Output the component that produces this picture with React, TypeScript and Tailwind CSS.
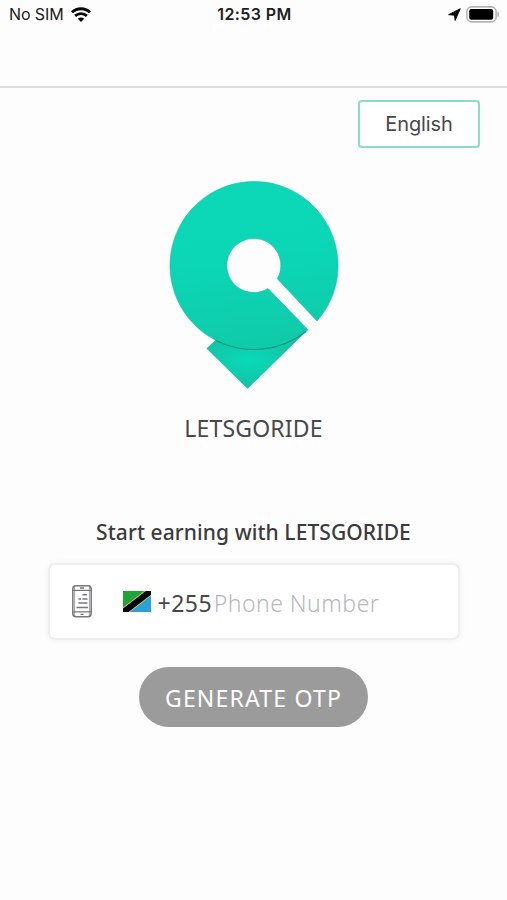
function WifiIcon() {
  return (
    <svg width="20" height="15" viewBox="0 0 20 15" fill="none" stroke="#080808" strokeWidth="2.9">
      <path d="M1 5.3C6.1.5 13.9.5 19 5.3" />
      <path d="M4.1 8.9c3.4-3.1 8.4-3.1 11.8 0" />
      <path d="M6.8 11.7c1.9-1.6 4.5-1.6 6.4 0L10 14.9z" fill="#080808" stroke="none" />
    </svg>
  );
}

function LocationIcon() {
  return (
    <svg width="13" height="13" viewBox="0 0 13 13" fill="#080808" stroke="#080808" strokeWidth=".9" strokeLinejoin="round">
      <path d="M12.3.7.6 6.7l5.9.5.6 5.3z" />
    </svg>
  );
}

function BatteryIcon() {
  return (
    <svg width="34" height="17" viewBox="0 0 34 17">
      <rect x=".9" y=".9" width="29.2" height="15" rx="4.6" fill="#fff" stroke="#b5b5b5" strokeWidth="1.6" />
      <rect x="3.2" y="3" width="24" height="10.8" rx="2.2" fill="#000" />
      <path d="M31.4 5.6c2.4.7 2.4 4.9 0 5.6z" fill="#b5b5b5" />
    </svg>
  );
}

function Logo() {
  return (
    <svg width="190" height="220" viewBox="159 175 190 220" role="img" aria-label="LETSGORIDE">
      <defs>
        <linearGradient id="ring" x1="0" y1="0" x2="0.15" y2="1">
          <stop offset="0" stopColor="#0cd8b8" />
          <stop offset="0.5" stopColor="#0bd6b6" />
          <stop offset="1" stopColor="#0fcbaa" />
        </linearGradient>
        <radialGradient id="tail" cx="0.42" cy="0.5" r="0.5">
          <stop offset="0" stopColor="#08dab8" />
          <stop offset="1" stopColor="#14c2a3" />
        </radialGradient>
      </defs>
      <path d="M206.5 348.5 215.5 340 254 344 308 329.8 247.5 388.8z" fill="url(#tail)" />
      <path
        d="M317 321.06A84 84 0 1 0 308 329.84L268 288.46A27 27 0 1 1 277.3 278.8z"
        fill="url(#ring)"
        stroke="#14bea1"
        strokeWidth=".6"
      />
      <path d="M216 340.4A84 84 0 0 0 306 331.5" fill="none" stroke="#109a81" strokeWidth="1.1" />
    </svg>
  );
}

function PhoneIcon() {
  return (
    <svg width="20" height="33" viewBox="0 0 20 33" fill="none" stroke="#77777d" strokeWidth="1.5">
      <rect x=".8" y=".8" width="18.4" height="31" rx="3.2" />
      <path d="M2.6 1v30.6M17.4 1v30.6" strokeWidth=".7" />
      <path d="M1 5.3h18M1 26.8h18M8 3h4M8.5 29.3h3" strokeWidth="1.3" />
      <path d="M10.5 9.8H15M6.5 14H9M10.5 14h5M6.5 18h9M4.5 22.5h11.5" />
    </svg>
  );
}

function TanzaniaFlag() {
  return (
    <svg className="-mt-0.5" width="28" height="21" viewBox="0 0 28 21">
      <path d="M0 0h28L0 21z" fill="#20a338" />
      <path d="M28 0v21H0z" fill="#29a0d8" />
      <path d="M0 21v-4.6L21.3 0H28v4.8L6.8 21z" fill="#d8d069" />
      <path d="M0 21v-3.6L22.8 0H28v3.8L5.5 21z" fill="#050505" />
    </svg>
  );
}

export default function App() {
  return (
    <div className="flex h-[900px] w-[507px] flex-col bg-[#fdfdfd] font-['Noto_Sans',sans-serif] text-[#48484a]">
      <header className="h-[88px] border-b-2 border-[#dedede] font-['Inter',sans-serif]">
        <div className="grid h-[28px] grid-cols-3 items-center pl-[9px] pr-[7px] text-[#202020]">
          <div className="flex items-center gap-[7px] text-[16px]">
            <span className="whitespace-nowrap tracking-[-0.1px]">No SIM</span>
            <WifiIcon />
          </div>
          <span className="whitespace-nowrap text-center text-[16px] font-semibold tracking-[0.4px]">12:53 PM</span>
          <div className="flex items-center justify-end gap-[5px]">
            <LocationIcon />
            <BatteryIcon />
          </div>
        </div>
      </header>

      <main className="flex flex-col items-center">
        <button className="mr-[27px] mt-3 h-12 w-[122px] self-end rounded-[4px] border-2 border-[#8adbc8] bg-white font-['Inter',sans-serif] text-[20px] tracking-[-0.1px]">
          English
        </button>

        <div className="mt-[27px]">
          <Logo />
        </div>
        <h1 className="mt-[17px] whitespace-nowrap text-[23px] leading-8 tracking-[0.2px]">LETSGORIDE</h1>

        <h2 className="mt-[72px] whitespace-nowrap text-[21px] font-medium leading-8 tracking-[0.08px] text-[#3b3b3d]">
          Start earning with LETSGORIDE
        </h2>

        <div className="mt-[15px] flex h-[77px] w-[412px] items-center rounded-[7px] border-2 border-[#eeeeee] bg-white pl-[22px] shadow-[0_0_6px_rgba(0,0,0,0.06)]">
          <PhoneIcon />
          <div className="ml-[31px] flex items-center pt-[2px]">
            <TanzaniaFlag />
            <span className="ml-[7px] pt-px text-[23px] tracking-[0.5px]">+255</span>
            <span className="ml-[1.5px] whitespace-nowrap pt-px text-[23px] font-light tracking-[0.5px] text-[#b8b8ba]">
              Phone Number
            </span>
          </div>
        </div>

        <button className="mt-[27px] h-[60px] w-[229px] whitespace-nowrap rounded-full bg-[#9b9b9b] pt-0.5 text-[23px] tracking-[1.2px] text-white">
          GENERATE OTP
        </button>
      </main>
    </div>
  );
}
